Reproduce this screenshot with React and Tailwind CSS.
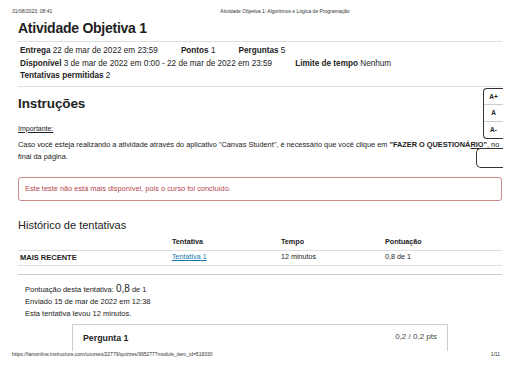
import React from "react";

const font = { fontFamily: '"Liberation Sans", Arial, sans-serif' };

export default function App() {
  const rows = [
    { label: "MAIS RECENTE", attempt: "Tentativa 1", time: "12 minutos", score: "0,8 de 1" },
  ];

  return (
    <div
      className="relative w-[520px] h-[367px] overflow-hidden bg-white text-[#222]"
      style={font}
    >
      {/* print header */}
      <div className="flex px-[12px] pt-[8px] text-[5px] leading-[6px] text-[#333]">
        <span>31/08/2023, 08:41</span>
        <span className="ml-[168px]">
          Atividade Objetiva 1: Algoritmos e Lógica de Programação
        </span>
      </div>

      <div className="px-[18px]">
        <h1 className="mt-[5px] text-[14px] leading-[18px] font-bold tracking-[-0.25px]">
          Atividade Objetiva 1
        </h1>

        {/* details */}
        <div className="mt-[4px] border-y border-[#ddd] pt-[3px] pb-[3px] pl-[2px] text-[8.2px] leading-[12.5px]">
          <div className="flex gap-[23px]">
            <span>
              <b>Entrega</b> 22 de mar de 2022 em 23:59
            </span>
            <span>
              <b>Pontos</b> 1
            </span>
            <span>
              <b>Perguntas</b> 5
            </span>
          </div>
          <div className="flex gap-[23px]">
            <span>
              <b>Disponível</b> 3 de mar de 2022 em 0:00 - 22 de mar de 2022 em 23:59
            </span>
            <span>
              <b>Limite de tempo</b> Nenhum
            </span>
          </div>
          <div>
            <b>Tentativas permitidas</b> 2
          </div>
        </div>

        {/* instructions */}
        <h2 className="mt-[8px] text-[13.5px] leading-[18px] font-bold tracking-[-0.1px]">
          Instruções
        </h2>
        <p className="mt-[11px] text-[7px] leading-[10px] underline">Importante:</p>
        <p className="mt-[5px] text-[7.35px] leading-[12px] whitespace-nowrap">
          Caso você esteja realizando a atividade através do aplicativo "Canvas Student", é
          necessário que você clique em <b>"FAZER O QUESTIONÁ</b>
          <b className="underline">RIO"</b>
          <span className="underline">, no</span>
          <br />
          final da página.
        </p>

        {/* alert */}
        <div className="mt-[14px] h-[24px] flex items-center rounded-[3px] border border-[#c98c8c] px-[6px] text-[7.4px] text-[#b5434d]">
          Este teste não está mais disponível, pois o curso foi concluído.
        </div>

        {/* attempts history */}
        <h3 className="mt-[17px] text-[11px] leading-[14px]">Histórico de tentativas</h3>
        <div className="mt-[3px] text-[7.2px]">
          <div className="grid grid-cols-[152px_109px_104px_1fr] pl-[2px] h-[16px] items-center border-b border-[#ddd] font-bold">
            <span></span>
            <span>Tentativa</span>
            <span>Tempo</span>
            <span>Pontuação</span>
          </div>
          {rows.map((r) => (
            <div
              key={r.label}
              className="grid grid-cols-[152px_109px_104px_1fr] pl-[2px] h-[15px] items-center border-b border-[#ddd]"
            >
              <span className="font-bold text-[7.5px]">{r.label}</span>
              <span className="text-[#1679a9] underline">{r.attempt}</span>
              <span>{r.time}</span>
              <span>{r.score}</span>
            </div>
          ))}
        </div>
        <div className="mt-[8px] border-t border-[#ccc]" />

        {/* submission summary */}
        <div className="mt-[8px] pl-[7px] text-[7.5px] leading-[12px]">
          <div>
            Pontuação desta tentativa: <span className="text-[10px]">0,8</span> de 1
          </div>
          <div>Enviado 15 de mar de 2022 em 12:38</div>
          <div>Esta tentativa levou 12 minutos.</div>
        </div>

        {/* question card */}
        <div className="ml-[54px] mt-[4px] w-[376px] h-[27px] border-x border-t border-[#ccc] flex items-start justify-between px-[10px] pt-[7px]">
          <span className="text-[8.8px] leading-[12px] font-bold">Pergunta 1</span>
          <span className="text-[8px] leading-[10px] text-[#444]">0,2 / 0,2 pts</span>
        </div>
      </div>

      {/* print footer */}
      <div className="absolute left-0 right-0 top-[351px] flex justify-between px-[12px] text-[5px] leading-[6px] text-[#333] bg-white">
        <span>https://famonline.instructure.com/courses/22779/quizzes/995277?module_item_id=518330</span>
        <span className="mr-[8px]">1/11</span>
      </div>

      {/* font size widget */}
      <div className="absolute right-[17px] top-[88px] w-[20px] flex flex-col rounded-l-[4px] border border-r-0 border-[#333] bg-white text-[6.5px] font-bold">
        <span className="h-[16px] flex items-center justify-center border-b border-[#ccc]">A+</span>
        <span className="h-[17px] flex items-center justify-center border-b border-[#ccc]">A</span>
        <span className="h-[16px] flex items-center justify-center">A-</span>
      </div>
      <div className="absolute right-[17px] top-[148px] w-[27px] h-[20px] rounded-l-[5px] border border-r-0 border-[#333] bg-white" />
    </div>
  );
}
